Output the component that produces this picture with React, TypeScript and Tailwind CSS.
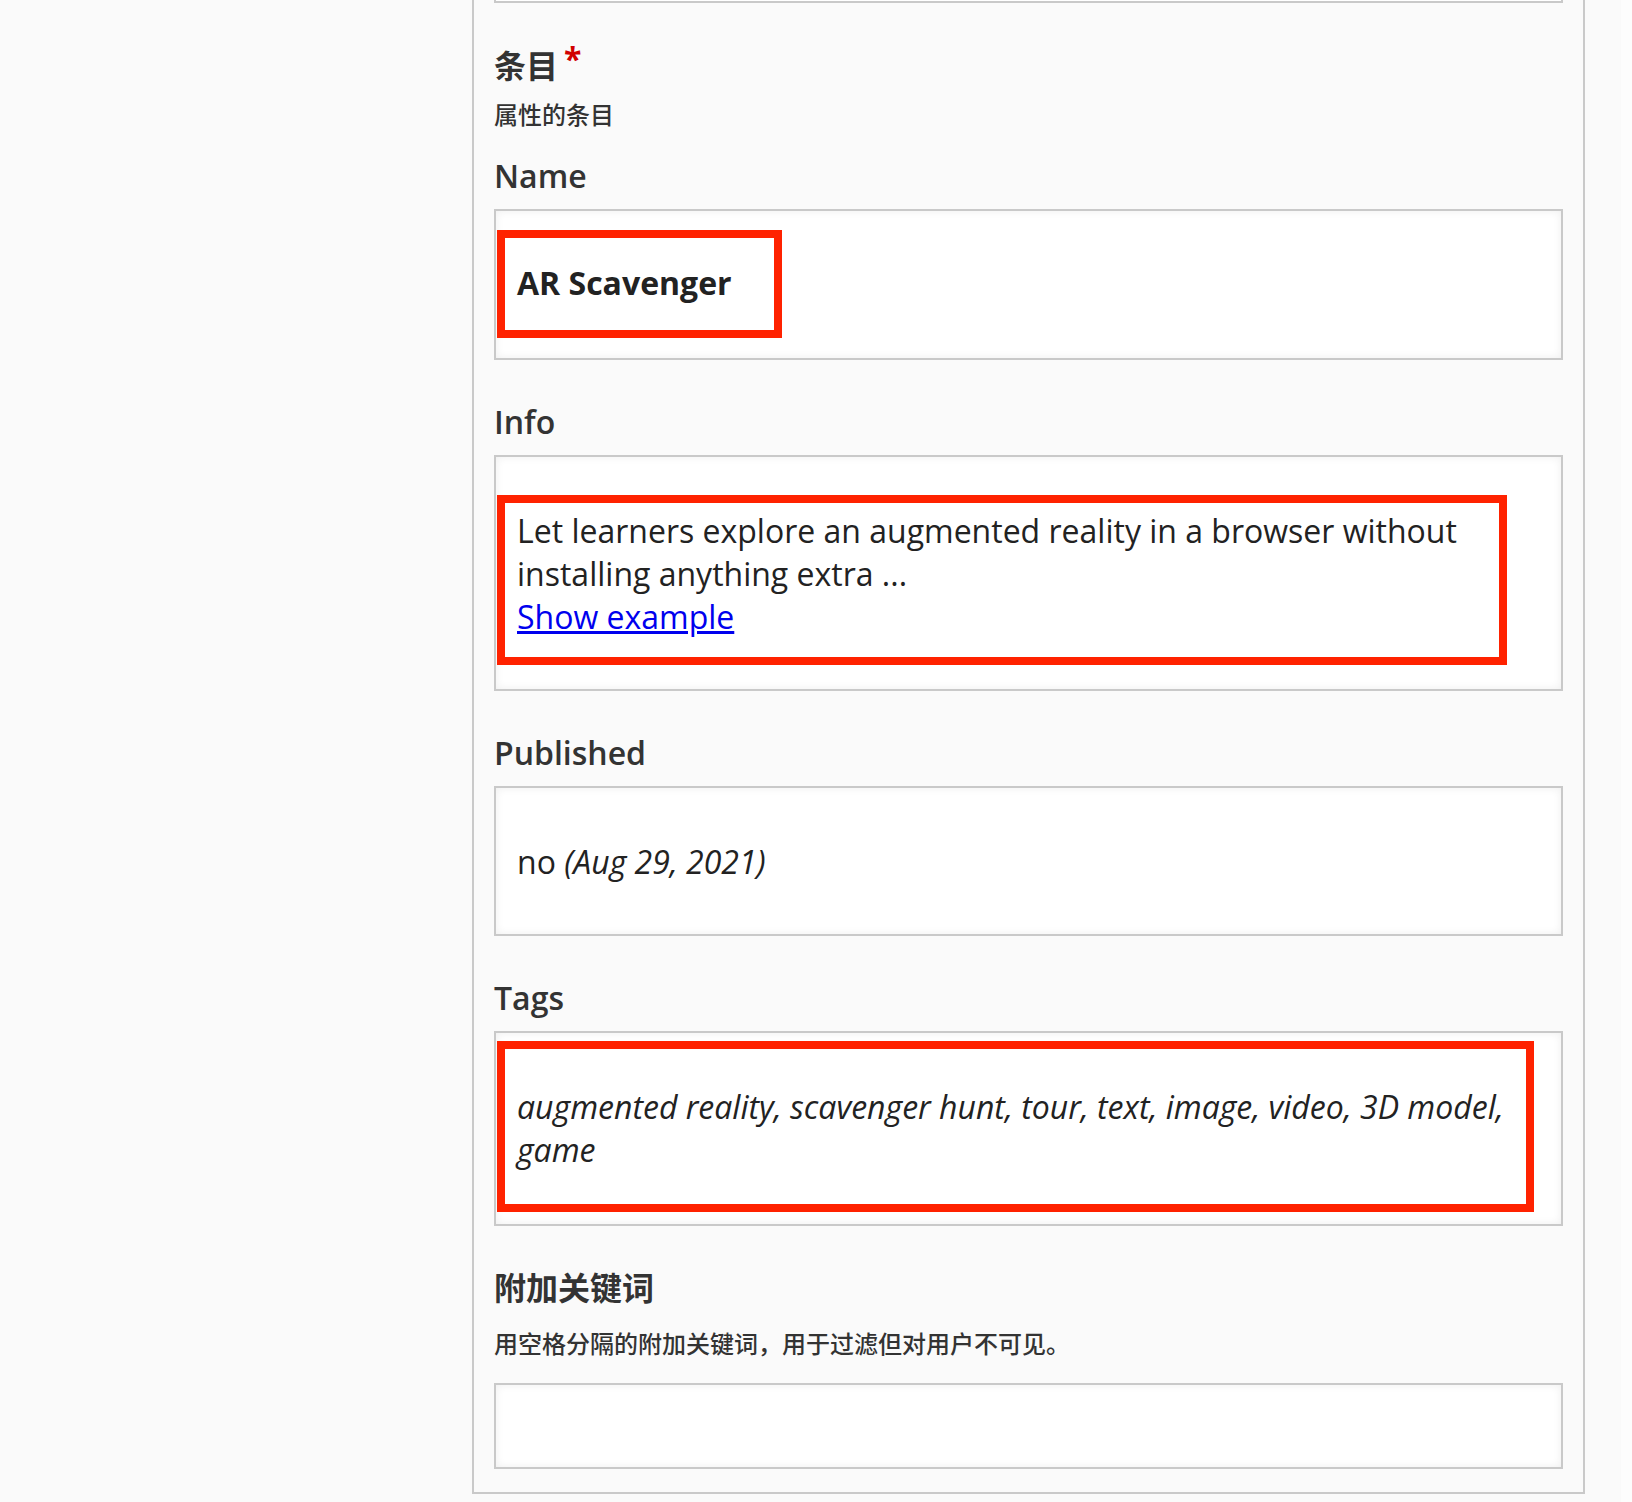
const fieldBox =
  "border-2 border-[#c9c9c9] bg-white shadow-[inset_0_0_8px_rgba(0,0,0,0.07)]";
const redBox = "border-8 border-[#ff2200]";

const Label = ({ children }: { children: React.ReactNode }) => (
  <div className="text-[32px] leading-[43px] font-semibold text-[#333]">{children}</div>
);

export default function App() {
  return (
    <div className="flex min-h-[1502px] bg-[#fafafa] font-['Open_Sans','Noto_Sans_CJK_SC',sans-serif] text-[#222]">
      <div className="w-[472px] shrink-0" />

      <div className="flex h-[1494px] w-[1113px] shrink-0 flex-col border-x-2 border-b-2 border-[#c9c9c9] px-[20px]">
        {/* bottom edge of the previous field */}
        <div className="h-[3px] border-x-2 border-b-2 border-[#c9c9c9] bg-white" />

        <div className="mt-[34px] text-[32px] leading-[43px] font-semibold text-[#333]">
          条目
          <span className="ml-[6px] align-[7px] font-bold text-[#d10000]">*</span>
        </div>
        <div className="mt-[11px] text-[24px] leading-[34px] font-medium text-[#333]">属性的条目</div>

        <div className="mt-[22px]">
          <Label>Name</Label>
        </div>
        <div className={`mt-[12px] h-[151px] pt-[19px] pl-px ${fieldBox}`}>
          <div className={`w-[285px] pt-[23px] pb-[26px] pl-[12px] ${redBox}`}>
            <span className="text-[32px] leading-[43px] font-bold">AR Scavenger</span>
          </div>
        </div>

        <div className="mt-[40px]">
          <Label>Info</Label>
        </div>
        <div className={`mt-[12px] h-[236px] pt-[38px] pl-px ${fieldBox}`}>
          <div className={`w-[1010px] pt-[6px] pb-[19px] pl-[12px] pr-[10px] text-[32px] leading-[43px] ${redBox}`}>
            Let learners explore an augmented reality in a browser without installing anything extra ...
            <br />
            <a href="#" className="text-[#0000ee] underline">
              Show example
            </a>
          </div>
        </div>

        <div className="mt-[40px]">
          <Label>Published</Label>
        </div>
        <div className={`mt-[12px] h-[150px] pt-[52px] pl-[21px] text-[32px] leading-[43px] ${fieldBox}`}>
          no <em>(Aug 29, 2021)</em>
        </div>

        <div className="mt-[40px]">
          <Label>Tags</Label>
        </div>
        <div className={`mt-[12px] h-[195px] pt-[8px] pl-px ${fieldBox}`}>
          <div className={`w-[1037px] pt-[36px] pb-[33px] pl-[12px] pr-[12px] text-[32px] leading-[43px] italic ${redBox}`}>
            augmented reality, scavenger hunt, tour, text, image, video, 3D model, game
          </div>
        </div>

        <div className="mt-[40px] text-[32px] leading-[43px] font-semibold text-[#333]">附加关键词</div>
        <div className="mt-[18px] text-[24px] leading-[34px] font-medium text-[#333]">
          用空格分隔的附加关键词，用于过滤但对用户不可见。
        </div>
        <div className={`mt-[22px] h-[86px] ${fieldBox}`} />
      </div>

      <div className="w-[36px] shrink-0" />
      <div className="flex-1 bg-[#fdfdfd]" />
    </div>
  );
}
